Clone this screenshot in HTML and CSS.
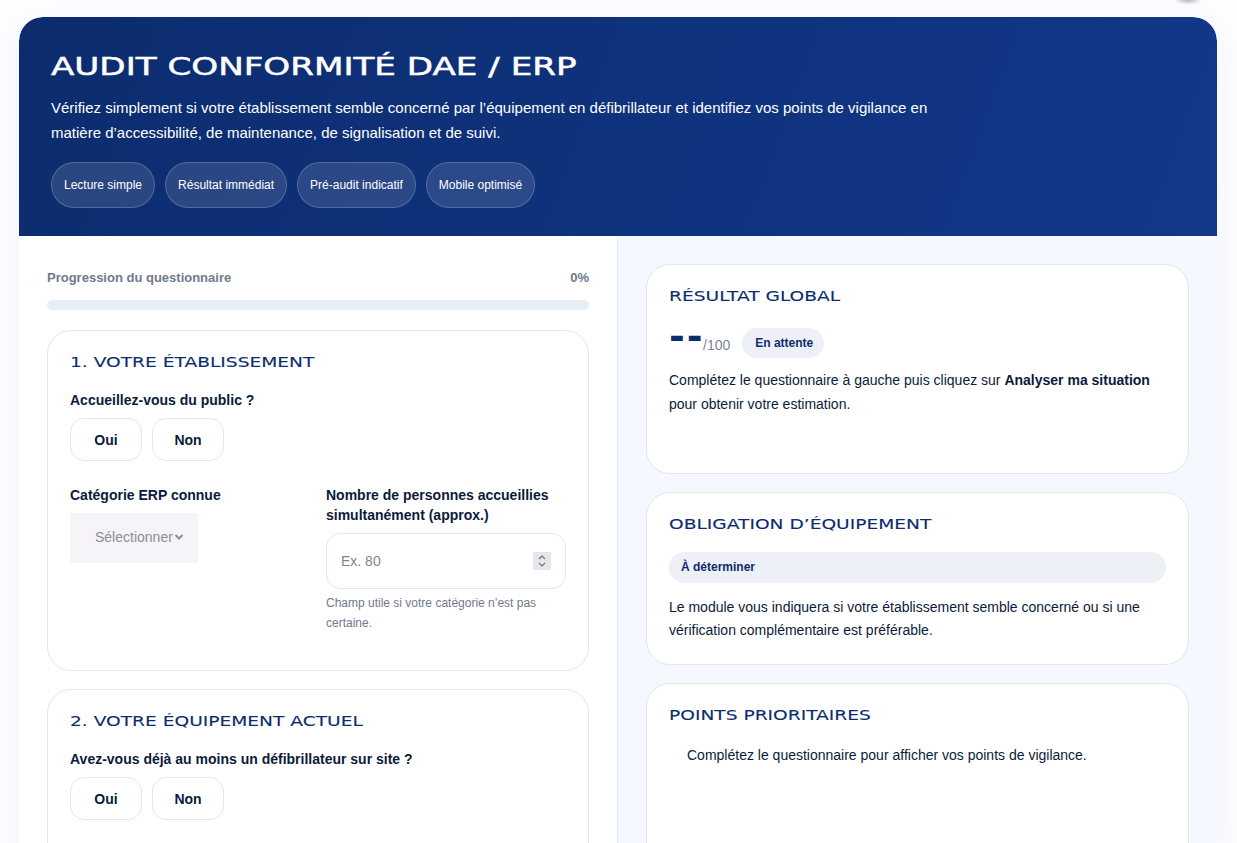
FILE: index.html
```html
<!DOCTYPE html>
<html lang="fr">
<head>
<meta charset="utf-8">
<title>Audit conformité DAE / ERP</title>
<link rel="stylesheet" href="styles.css">
</head>
<body>
<div class="blob"></div>
<main class="shell">
  <header class="hero">
    <h1 class="hero-title">AUDIT CONFORMITÉ DAE / ERP</h1>
    <p class="hero-text">Vérifiez simplement si votre établissement semble concerné par l’équipement en défibrillateur et identifiez vos points de vigilance en matière d’accessibilité, de maintenance, de signalisation et de suivi.</p>
    <div class="chips">
      <span class="chip">Lecture simple</span>
      <span class="chip">Résultat immédiat</span>
      <span class="chip">Pré-audit indicatif</span>
      <span class="chip">Mobile optimisé</span>
    </div>
  </header>
  <div class="columns">
    <section class="col-left">
      <div class="progress-head"><span>Progression du questionnaire</span><span>0%</span></div>
      <div class="progress-bar"></div>
      <article class="card card-one">
        <h2 class="card-title">1. VOTRE ÉTABLISSEMENT</h2>
        <div class="label">Accueillez-vous du public ?</div>
        <div class="choices"><button class="choice">Oui</button><button class="choice">Non</button></div>
        <div class="fields">
          <div class="field">
            <div class="label">Catégorie ERP connue</div>
            <div class="select"><span>Sélectionner</span>
              <svg class="chevron" width="10" height="6" viewBox="0 0 10 6"><path d="M1.5 1l3.5 3.500L8.500 1" fill="none" stroke="#8d8d96" stroke-width="2"/></svg>
            </div>
          </div>
          <div class="field">
            <div class="label">Nombre de personnes accueillies simultanément (approx.)</div>
            <div class="number"><span class="placeholder">Ex. 80</span>
              <span class="spinner"><svg width="18" height="18" viewBox="0 0 18 18"><path d="M6 7l3-3 3 3M6 11l3 3 3-3" fill="none" stroke="#6f7280" stroke-width="1.2"/></svg></span>
            </div>
            <p class="hint">Champ utile si votre catégorie n’est pas certaine.</p>
          </div>
        </div>
      </article>
      <article class="card card-two">
        <h2 class="card-title">2. VOTRE ÉQUIPEMENT ACTUEL</h2>
        <div class="label">Avez-vous déjà au moins un défibrillateur sur site ?</div>
        <div class="choices"><button class="choice">Oui</button><button class="choice">Non</button></div>
      </article>
    </section>
    <aside class="col-right">
      <article class="card result-card">
        <h2 class="card-title">RÉSULTAT GLOBAL</h2>
        <div class="score-row">
          <span class="score">--</span><span class="score-max">/100</span>
          <span class="badge">En attente</span>
        </div>
        <p class="body-text">Complétez le questionnaire à gauche puis cliquez sur <strong>Analyser ma situation</strong> pour obtenir votre estimation.</p>
      </article>
      <article class="card duty-card">
        <h2 class="card-title">OBLIGATION D’ÉQUIPEMENT</h2>
        <div class="pill">À déterminer</div>
        <p class="body-text duty-text">Le module vous indiquera si votre établissement semble concerné ou si une vérification complémentaire est préférable.</p>
      </article>
      <article class="card points-card">
        <h2 class="card-title">POINTS PRIORITAIRES</h2>
        <ul class="points"><li>Complétez le questionnaire pour afficher vos points de vigilance.</li></ul>
      </article>
    </aside>
  </div>
</main>
</body>
</html>
```
FILE: styles.css
```css
* { box-sizing: border-box; }
html, body { margin: 0; height: 843px; overflow: hidden; }
body {
  background: #fcfdff;
  font-family: "Liberation Sans", Arial, sans-serif;
  color: #0b1b3a;
  padding: 17px 20px 0 19px;
  position: relative;
}
.blob {
  position: absolute;
  top: 0;
  left: 1174px;
  width: 28px;
  height: 5px;
  background: radial-gradient(ellipse 50% 100% at 50% 0, #b4b7bd, rgba(180, 183, 189, 0));
}
.shell {
  height: 826px;
  overflow: hidden;
  border-radius: 24px 24px 0 0;
  background: #fff;
  box-shadow: 0 10px 30px rgba(11, 47, 120, .06);
}
.hero {
  height: 219px;
  padding: 34px 32px 0;
  border-radius: 24px 24px 0 0;
  background: linear-gradient(110deg, #0c2c6e 0%, #12388a 100%);
  color: #fff;
}
.hero-title {
  margin: 0;
  font: 400 25px/32px "DejaVu Sans", sans-serif;
  -webkit-text-stroke: .5px #fff;
  transform: scaleX(1.366);
  transform-origin: left center;
}
.hero-text {
  margin: 12px 0 0;
  max-width: 900px;
  font-size: 15px;
  line-height: 25px;
}
.chips { display: flex; gap: 10px; margin-top: 17px; }
.chip {
  display: flex;
  align-items: center;
  height: 46px;
  padding: 0 12px;
  border: 1px solid rgba(255, 255, 255, .2);
  border-radius: 23px;
  background: rgba(255, 255, 255, .12);
  font-size: 12px;
}
.columns { display: grid; grid-template-columns: 598px 600px; height: 607px; }
.col-left { padding: 28px 28px 0; }
.col-right {
  padding: 28px 28px 0;
  background: #f5f8fe;
  border-left: 1px solid #e5e9f2;
}
.progress-head {
  display: flex;
  justify-content: space-between;
  font-size: 13px;
  font-weight: 700;
  line-height: 27px;
  color: #6f7a8b;
}
.progress-bar {
  height: 10px;
  margin-top: 9px;
  border-radius: 5px;
  background: #e8eef6;
}
.card {
  margin-bottom: 18px;
  padding: 22px;
  border: 1px solid #e1e6ef;
  border-radius: 24px;
  background: #fff;
}
.card-one { margin-top: 20px; height: 341px; }
.card-two { height: 300px; }
.result-card { height: 210px; }
.duty-card { height: 173px; }
.points-card { height: 300px; }
.card-title {
  margin: 0;
  font: 400 14px/18px "DejaVu Sans", sans-serif;
  -webkit-text-stroke: .1px #0c2c6e;
  color: #0c2c6e;
  transform: scaleX(1.33);
  transform-origin: left center;
}
.label {
  margin-top: 19px;
  font-size: 14px;
  font-weight: 700;
  line-height: 20px;
}
.field .label { margin-top: 0; }
.choices { display: flex; gap: 10px; margin-top: 8px; }
.choice {
  width: 72px;
  height: 43px;
  padding: 0;
  border: 1px solid #e1e6ef;
  border-radius: 14px;
  background: #fff;
  color: #0b1b3a;
  font: 700 14px "Liberation Sans", Arial, sans-serif;
}
.fields {
  display: grid;
  grid-template-columns: 1fr 1fr;
  gap: 16px;
  margin-top: 24px;
}
.select {
  display: inline-flex;
  align-items: center;
  gap: 1px;
  width: 128px;
  height: 50px;
  margin-top: 8px;
  padding: 0 0 2px 25px;
  background: #f6f3f9;
  color: #8d8d96;
  font-size: 14px;
}
.number {
  display: flex;
  align-items: center;
  justify-content: space-between;
  height: 56px;
  margin-top: 8px;
  padding: 0 14px;
  border: 1px solid #e1e6ef;
  border-radius: 14px;
  background: #fff;
  color: #85858d;
  font-size: 14px;
}
.spinner { display: block; width: 18px; height: 18px; background: #e6e6ec; }
.spinner svg { display: block; }
.hint {
  margin: 4px 0 0;
  font-size: 12px;
  line-height: 20px;
  color: #6f7a8b;
}
.score-row { display: flex; align-items: center; margin-top: 23px; height: 30px; }
.score {
  width: 34px;
  margin-bottom: 14px;
  font: 700 38px/30px "DejaVu Sans", sans-serif;
  letter-spacing: 2px;
  white-space: nowrap;
  color: #0c2c6e;
}
.score-max { margin: 4px 12px 0 0; font-size: 14px; color: #7d8594; }
.badge {
  display: flex;
  align-items: center;
  height: 30px;
  padding: 0 11px 0 13px;
  border-radius: 15px;
  background: #eef0f7;
  color: #0c2c6e;
  font-size: 12px;
  font-weight: 700;
}
.body-text { margin: 11px 0 0; font-size: 14px; line-height: 23.8px; }
.pill {
  height: 31px;
  margin-top: 19px;
  padding: 0 12px;
  border-radius: 16px;
  background: #eef0f7;
  color: #0c2c6e;
  font-size: 12px;
  font-weight: 700;
  line-height: 30px;
}
.duty-text { margin-top: 13px; line-height: 23.2px; }
.points { margin: 20px 0 0; padding-left: 18px; list-style: none; font-size: 14px; line-height: 23.8px; }
```
